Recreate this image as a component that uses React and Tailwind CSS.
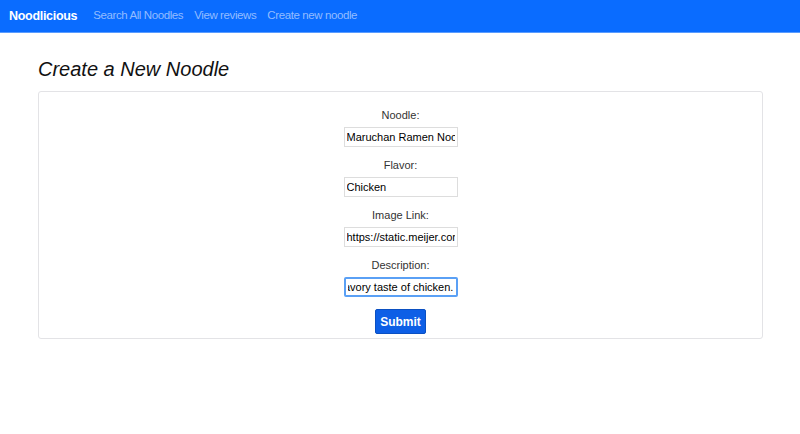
import { useState } from 'react';

const fields = [
  { label: 'Noodle:', value: 'Maruchan Ramen Noodle Soup' },
  { label: 'Flavor:', value: 'Chicken' },
  { label: 'Image Link:', value: 'https://static.meijer.com/Media/000/41789/0004178900121_0_A1C1_0600.png' },
  { label: 'Description:', value: 'Enjoy the savory taste of chicken.', focused: true },
];

const NavBar = () => (
  <nav className="h-[33px] bg-[#0a6cff] border-b border-[#5a9cff] flex items-center px-[9px]">
    <span className="text-white font-bold text-[12.5px] mr-[16px] tracking-[-0.3px]">Noodlicious</span>
    <div className="flex gap-[11px] text-[11.5px] text-[#93bcff] tracking-[-0.4px]">
      <span>Search All Noodles</span>
      <span>View reviews</span>
      <span>Create new noodle</span>
    </div>
  </nav>
);

const Field = ({ label, value, focused }) => (
  <div className="flex flex-col items-center">
    <label className="text-[11px] text-[#333] mb-[5px] leading-[14px]">{label}</label>
    <input
      readOnly
      defaultValue={value}
      ref={focused ? (el) => { if (el) el.scrollLeft = el.scrollWidth; } : undefined}
      className={
        focused
          ? 'w-[114px] h-[20px] px-[2px] text-[11px] text-black border-2 border-[#5aa0f5] rounded-[2px] outline-none text-right'
          : 'w-[114px] h-[20px] px-[2px] text-[11px] text-black border border-[#ddd] outline-none'
      }
    />
  </div>
);

export default function App() {
  const [noodle] = useState(fields);

  return (
    <div className="min-h-[434px] bg-white font-['Liberation_Sans',Arial,sans-serif]">
      <NavBar />
      <div className="pl-[38px] pr-[37px] pt-[24px]">
        <h1 className="italic text-[20px] text-[#111] leading-[24px] mb-[10px]">Create a New Noodle</h1>
        <div className="border border-[#e3e3e6] rounded-[3px] h-[248px] pt-[16px] flex flex-col items-center gap-[11px]">
          {noodle.map((f) => (
            <Field key={f.label} {...f} />
          ))}
          <button className="mt-[1px] w-[51px] h-[25px] bg-[#0d5fe6] border border-[#0b50c2] rounded-[2px] text-white font-bold text-[12px]">
            Submit
          </button>
        </div>
      </div>
    </div>
  );
}
